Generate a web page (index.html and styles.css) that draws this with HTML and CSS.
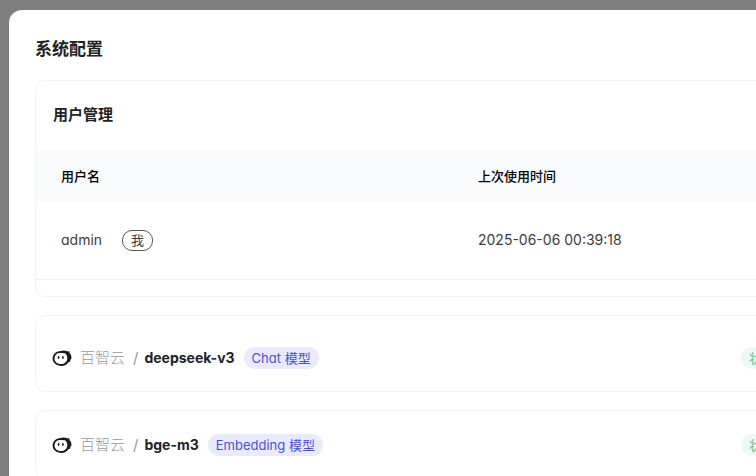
FILE: index.html
```html
<!DOCTYPE html>
<html lang="zh-CN">
<head>
    <meta charset="UTF-8">
    <meta name="viewport" content="width=device-width, initial-scale=1.0">
    <title>系统配置</title>
    <link rel="stylesheet" href="styles.css">
</head>
<body>
    <svg class="sprite" aria-hidden="true">
        <symbol id="logo" viewBox="0 0 20 18">
            <path fill="#17181a" d="M.6 9.600C.6 5 4.400 2 9 2C10.800 1.300 13 1.300 15 2.200L17.800 2.400L17.400 4C19.200 5.600 19.900 8 19.200 10.200L18.200 10.800L18.400 12.400L16.400 13.200C15 15.600 12.500 16.900 9.400 16.900C4.500 16.900 .6 14 .6 9.600Z"/>
            <path fill="#fff" d="M2.500 9.600C2.500 6.600 4.500 4.400 7.300 4.100C9.500 3.900 11.300 4.500 13 4.200C14.600 5.500 15.400 7.300 15.300 9.500C15.100 13 12.500 15.100 9 15.100C5.300 15.100 2.500 12.900 2.500 9.600Z"/>
            <ellipse fill="#17181a" cx="6.600" cy="8.400" rx=".8" ry="1.600"/>
            <ellipse fill="#17181a" cx="10.900" cy="8.400" rx=".8" ry="1.600"/>
        </symbol>
    </svg>

    <main class="modal">
        <h1 class="modal-title">系统配置</h1>

        <section class="card users">
            <h2 class="card-title">用户管理</h2>
            <table class="user-table">
                <thead>
                    <tr>
                        <th class="name-col">用户名</th>
                        <th>上次使用时间</th>
                    </tr>
                </thead>
                <tbody>
                    <tr>
                        <td>admin <span class="me">我</span></td>
                        <td>2025-06-06 00:39:18</td>
                    </tr>
                </tbody>
            </table>
        </section>

        <section class="card model">
            <svg class="logo" aria-hidden="true"><use href="#logo"/></svg>
            <span class="vendor">百智云</span>
            <span class="slash">/</span>
            <strong class="model-name">deepseek-v3</strong>
            <span class="tag">Chat 模型</span>
            <span class="tag status">状态正常</span>
        </section>

        <section class="card model compact">
            <svg class="logo" aria-hidden="true"><use href="#logo"/></svg>
            <span class="vendor">百智云</span>
            <span class="slash">/</span>
            <strong class="model-name">bge-m3</strong>
            <span class="tag">Embedding 模型</span>
            <span class="tag status">状态正常</span>
        </section>
    </main>
</body>
</html>
```

FILE: styles.css
```css
* {
    box-sizing: border-box;
}

body {
    margin: 0;
    height: 100vh;
    overflow: hidden;
    padding: 10px 0 0 9px;
    background: #7f7f7f;
    color: #202226;
    font-family: Inter, "Noto Sans CJK SC", sans-serif;
    font-feature-settings: "cv11";
    font-size: 15px;
    line-height: 24px;
}

.sprite {
    display: none;
}

/* the dialog is wider than the window, its right part is cut */
.modal {
    width: calc(100% + 120px);
    min-height: 100%;
    padding: 27px 26px;
    background: #fff;
    border-radius: 13px;
}

.modal-title {
    margin: 0 0 19px;
    font-size: 17px;
    font-weight: 700;
}

.card {
    margin-bottom: 18px;
    border: 1px solid #f2f3f5;
    border-radius: 10px;
}

.users {
    padding: 22px 0 16px;
}

.card-title {
    margin: 0 17px 23px;
    font-size: 15px;
    font-weight: 700;
}

.user-table {
    width: 100%;
    border-collapse: collapse;
    text-align: left;
}

.user-table th {
    height: 52px;
    padding: 0 25px;
    background: #f8fafc;
    font-size: 13px;
    font-weight: 500;
    color: #000;
}

.user-table td {
    height: 77px;
    padding: 0 25px;
    border-bottom: 1px solid #f2f3f5;
    color: #3c3c3c;
    font-size: 14px;
}

.user-table .name-col {
    width: 417px;
}

.me {
    display: inline-block;
    margin-left: 16px;
    padding: 0 8px;
    border: 1px solid #555;
    border-radius: 10px;
    font-size: 13px;
    line-height: 19px;
}

.model {
    display: flex;
    align-items: center;
    height: 77px;
    padding: 10px 16px 0;
}

.compact {
    height: 70px;
    padding-top: 0;
}

.logo {
    width: 20px;
    height: 18px;
}

.vendor {
    margin-left: 8px;
    color: #999;
    font-weight: 300;
}

.slash {
    margin: 0 6px 0 8px;
    color: #999;
}

.model-name {
    font-size: 14px;
    font-weight: 700;
}

.tag {
    margin-left: 9px;
    padding: 0 8px;
    border-radius: 11px;
    background: #e9ebfd;
    color: #4a50d6;
    font-size: 13px;
    line-height: 22px;
}

.status {
    margin-left: auto;
    margin-right: 24px;
    background: #ebfaf4;
    color: #5fc49b;
}
```
